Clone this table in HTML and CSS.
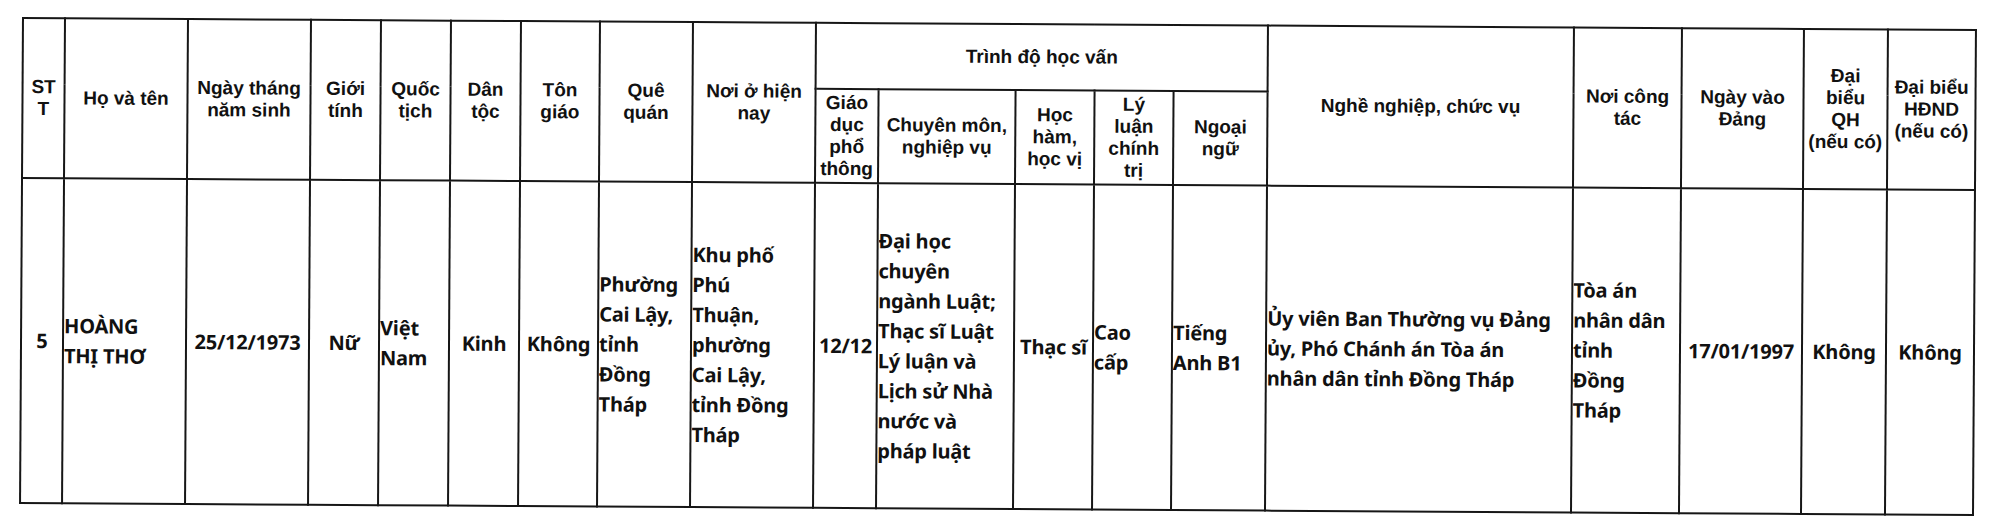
FILE: index.html
```html
<!DOCTYPE html>
<html lang="vi">
<head>
<meta charset="utf-8">
<title>Danh sách</title>
<link rel="stylesheet" href="styles.css">
</head>
<body>
<table class="sheet">
  <colgroup>
    <col class="c-stt"><col class="c-name"><col class="c-dob"><col class="c-sex"><col class="c-nat">
    <col class="c-eth"><col class="c-rel"><col class="c-home"><col class="c-addr"><col class="c-gen">
    <col class="c-spec"><col class="c-deg"><col class="c-pol"><col class="c-lang"><col class="c-job">
    <col class="c-work"><col class="c-party"><col class="c-qh"><col class="c-hd">
  </colgroup>
  <thead>
    <tr class="h1">
      <th rowspan="2">ST<br>T</th>
      <th rowspan="2">Họ và tên</th>
      <th rowspan="2">Ngày tháng<br>năm sinh</th>
      <th rowspan="2">Giới<br>tính</th>
      <th rowspan="2">Quốc<br>tịch</th>
      <th rowspan="2">Dân<br>tộc</th>
      <th rowspan="2">Tôn<br>giáo</th>
      <th rowspan="2">Quê<br>quán</th>
      <th rowspan="2">Nơi ở hiện<br>nay</th>
      <th colspan="5">Trình độ học vấn</th>
      <th rowspan="2">Nghề nghiệp, chức vụ</th>
      <th rowspan="2">Nơi công<br>tác</th>
      <th rowspan="2">Ngày vào<br>Đảng</th>
      <th rowspan="2">Đại<br>biểu<br>QH<br>(nếu có)</th>
      <th rowspan="2">Đại biểu<br>HĐND<br>(nếu có)</th>
    </tr>
    <tr class="h2">
      <th>Giáo<br>dục<br>phổ<br>thông</th>
      <th>Chuyên môn,<br>nghiệp vụ</th>
      <th>Học<br>hàm,<br>học vị</th>
      <th>Lý<br>luận<br>chính<br>trị</th>
      <th>Ngoại<br>ngữ</th>
    </tr>
  </thead>
  <tbody>
    <tr class="row">
      <td class="ctr">5</td>
      <td class="lft p4">HOÀNG<br>THỊ THƠ</td>
      <td class="ctr">25/12/1973</td>
      <td class="ctr">Nữ</td>
      <td class="lft p9">Việt<br>Nam</td>
      <td class="ctr">Kinh</td>
      <td class="ctr">Không</td>
      <td class="lft p3">Phường<br>Cai Lậy,<br>tỉnh<br>Đồng<br>Tháp</td>
      <td class="lft p3">Khu phố<br>Phú<br>Thuận,<br>phường<br>Cai Lậy,<br>tỉnh Đồng<br>Tháp</td>
      <td class="ctr">12/12</td>
      <td class="lft p2">Đại học<br>chuyên<br>ngành Luật;<br>Thạc sĩ Luật<br>Lý luận và<br>Lịch sử Nhà<br>nước và<br>pháp luật</td>
      <td class="ctr">Thạc sĩ</td>
      <td class="lft p3">Cao<br>cấp</td>
      <td class="lft p2">Tiếng<br>Anh B1</td>
      <td class="lft p2">Ủy viên Ban Thường vụ Đảng<br>ủy, Phó Chánh án Tòa án<br>nhân dân tỉnh Đồng Tháp</td>
      <td class="lft p2">Tòa án<br>nhân dân<br>tỉnh<br>Đồng<br>Tháp</td>
      <td class="ctr">17/01/1997</td>
      <td class="ctr">Không</td>
      <td class="ctr">Không</td>
    </tr>
  </tbody>
</table>
</body>
</html>
```
FILE: styles.css
```css
html, body {
  margin: 0;
  padding: 0;
  background: #ffffff;
}

body {
  width: 2000px;
  height: 531px;
  overflow: hidden;
}

.sheet {
  margin: 17px 0 0 22px;
  width: 1953px;
  table-layout: fixed;
  border-collapse: collapse;
  color: #111111;
  transform: rotate(0.35deg);
  transform-origin: 0 0;
}

.c-stt { width: 42px; }
.c-name { width: 123px; }
.c-dob { width: 123px; }
.c-sex { width: 70px; }
.c-nat { width: 70px; }
.c-eth { width: 70px; }
.c-rel { width: 79px; }
.c-home { width: 93px; }
.c-addr { width: 123px; }
.c-gen { width: 63px; }
.c-spec { width: 137px; }
.c-deg { width: 79px; }
.c-pol { width: 79px; }
.c-lang { width: 94px; }
.c-job { width: 306px; }
.c-work { width: 108px; }
.c-party { width: 122px; }
.c-qh { width: 84px; }
.c-hd { width: 88px; }

.sheet th,
.sheet td {
  border: 2px solid #161616;
  padding: 0;
  vertical-align: middle;
  overflow: hidden;
}

.sheet th {
  font-family: "Liberation Sans", Arial, sans-serif;
  font-weight: 700;
  font-size: 19px;
  line-height: 22px;
  text-align: center;
}

.h1 { height: 66px; }
.h2 { height: 94px; }

.row { height: 325px; }

.sheet td {
  font-family: "Noto Sans", "Open Sans", sans-serif;
  font-weight: 700;
  font-size: 20px;
  line-height: 30px;
  letter-spacing: -0.2px;
}

.ctr { text-align: center; }
.lft { text-align: left; }
.p2 { padding-left: 2px; }
.p3 { padding-left: 3px; }
.p4 { padding-left: 4px; }
.p9 { padding-left: 9px; }
```
